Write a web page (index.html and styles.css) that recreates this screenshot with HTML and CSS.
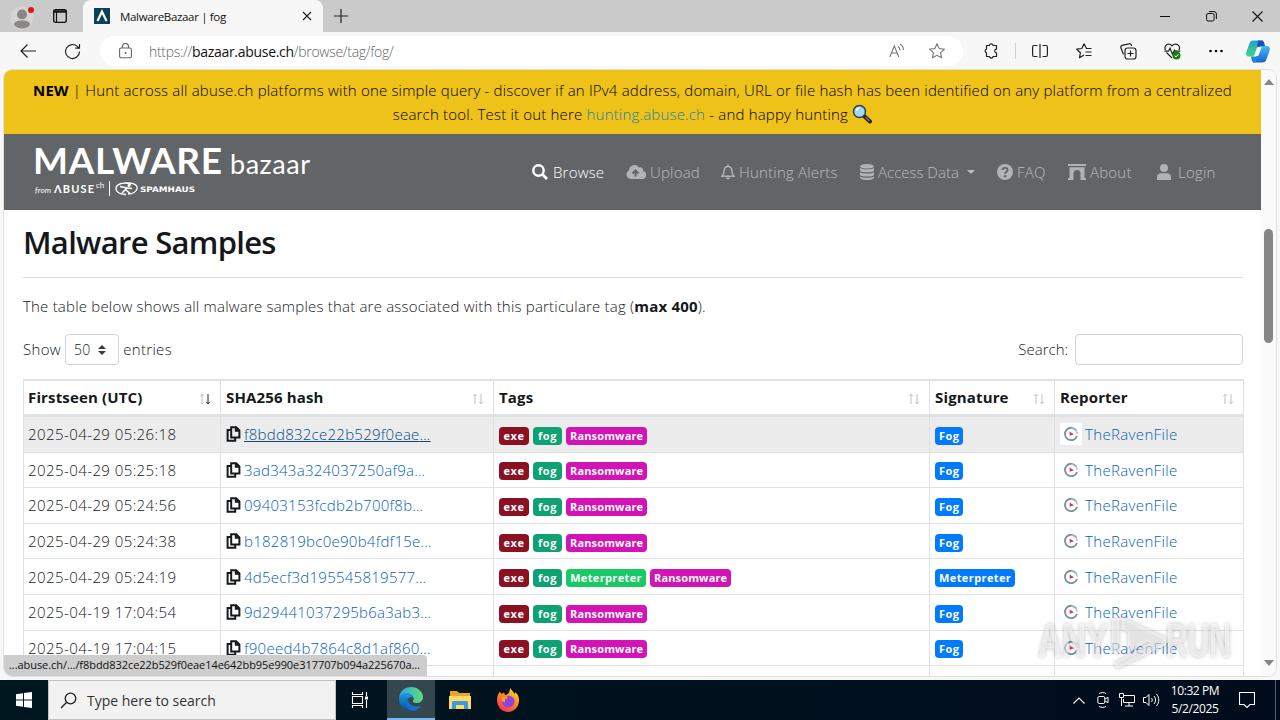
FILE: index.html
```html
<!DOCTYPE html>
<html lang="en">

<head>
    <meta charset="UTF-8">
    <meta name="viewport" content="width=device-width, initial-scale=1.0">
    <title>MalwareBazaar | fog</title>
    <link rel="stylesheet" href="styles.css">
</head>

<body>
    <svg class="sprite" width="0" height="0">
        <symbol id="copy" viewBox="0 0 15 16">
            <path d="M5.2 1.2h5l3.2 3.2v7.2H5.2zM9.8 1.2v3.6h3.6M5 4H1.6v10.8h7.6V12" fill="none" stroke="#16191c" stroke-width="2" />
        </symbol>
        <symbol id="sort" viewBox="0 0 12 12">
            <path d="M3 11V1.5M1.2 3.2L3 1.2l1.8 2" fill="none" stroke="#bfc0c1" />
            <path d="M9 1v9.5M7.2 8.8l1.8 2 1.8-2" fill="none" stroke="#bfc0c1" />
        </symbol>
        <symbol id="sort-desc" viewBox="0 0 12 12">
            <path d="M3 11V1.5M1.2 3.2L3 1.2l1.8 2" fill="none" stroke="#bfc0c1" />
            <path d="M9 1v9.5M7.2 8.8l1.8 2 1.8-2" fill="none" stroke="#222" />
        </symbol>
        <symbol id="avatar" viewBox="0 0 22 22">
            <rect width="22" height="22" fill="#fff" />
            <path d="M16.300 7.500A6.200 6.200 0 1 0 17 13" fill="none" stroke="#78909c" stroke-width="1.800" />
            <path d="M11 5.300a6 6 0 0 1 6.200 5.500" fill="none" stroke="#a9bac0" stroke-width="1.400" />
            <path d="M9.500 8.500l4.500 2.700-4.200 1.600z" fill="#d8365a" />
        </symbol>
    </svg>

    <!-- browser tabs -->
    <div class="tabbar">
        <svg class="profile" width="24" height="28" viewBox="0 0 24 28">
            <circle cx="12" cy="16" r="11.5" fill="#d6d4d2" />
            <circle cx="12" cy="12.5" r="5" fill="#8a8886" />
            <path d="M4 23c0-3.500 3.500-4.500 8-4.500s8 1 8 4.500c-2 2.500-5 3.500-8 3.500s-6-1-8-3.500z" fill="#8a8886" />
            <circle cx="21" cy="8" r="3" fill="#e0141e" />
        </svg>
        <svg class="workspace" width="16" height="16" viewBox="0 0 16 16">
            <rect x="1.700" y="1.700" width="12.600" height="12.600" rx="2" fill="none" stroke="#111" stroke-width="1.300" />
            <path d="M1.500 3.500h13" stroke="#111" stroke-width="2.400" fill="none" />
            <path d="M4.500 4v10" stroke="#111" stroke-width="1.200" />
        </svg>
        <div class="tab">
            <svg width="16" height="16" viewBox="0 0 16 16">
                <rect width="16" height="16" fill="#0b4251" />
                <path d="M3.500 13L8 3.500 12.500 13" fill="none" stroke="#fff" stroke-width="2.200" />
            </svg>
            <span class="tab-title">MalwareBazaar | fog</span>
            <svg width="10" height="10" viewBox="0 0 10 10"><path d="M1 1l8 8M9 1l-8 8" stroke="#222" stroke-width="1.200" /></svg>
        </div>
        <svg class="plus" width="14" height="14" viewBox="0 0 14 14"><path d="M7 0v14M0 7h14" stroke="#222" stroke-width="1.200" /></svg>
        <div class="controls">
            <span><svg width="10" height="10" viewBox="0 0 10 10"><path d="M0 5.500h10" stroke="#111" /></svg></span>
            <span><svg width="11" height="11" viewBox="0 0 11 11"><rect x=".6" y="2.500" width="7.500" height="7.500" rx="1.500" fill="none" stroke="#111" /><path d="M3 .6h5a2.400 2.400 0 0 1 2.400 2.400v5" fill="none" stroke="#111" /></svg></span>
            <span><svg width="11" height="11" viewBox="0 0 11 11"><path d="M.5.5l10 10M10.500.5l-10 10" stroke="#111" stroke-width="1.100" /></svg></span>
        </div>
    </div>

    <!-- address bar -->
    <div class="toolbar">
        <svg class="back" width="16" height="14" viewBox="0 0 16 14"><path d="M16 7H1M7.500.5L1 7l6.500 6.500" fill="none" stroke="#222" stroke-width="1.200" /></svg>
        <svg class="reload" width="17" height="17" viewBox="0 0 17 17"><path d="M15.500 8.500a7 7 0 1 1-2-4.900L15.300 5M15.500 1v4.200h-4.200" fill="none" stroke="#222" stroke-width="1.200" /></svg>
        <div class="address">
            <svg class="lock" width="13" height="16" viewBox="0 0 13 16"><rect x=".6" y="5" width="11.800" height="9.800" rx="1.500" fill="none" stroke="#666" stroke-width="1.100" /><path d="M3.500 5V3.500a3 3 0 0 1 6 0V5" fill="none" stroke="#666" stroke-width="1.100" /><circle cx="6.500" cy="10" r="1" fill="#666" /></svg>
            <span class="url">https://<b>bazaar.abuse.ch</b>/browse/tag/fog/</span>
            <svg class="read" width="16" height="16" viewBox="0 0 16 16"><path d="M.8 14L5.300 3l4.500 11M2.500 10h5.600M9 3.500c1.500 1 2 2.300 2 4M11 1c2.500 1.500 3.500 3.500 3.500 6" fill="none" stroke="#777" stroke-width="1.100" /></svg>
            <svg width="16" height="16" viewBox="0 0 16 16"><path d="M8 .8l2.200 4.700 5.100.7-3.700 3.500.9 5.100L8 12.300l-4.500 2.500.9-5.100L.7 6.200l5.100-.7z" fill="none" stroke="#777" stroke-width="1.100" /></svg>
        </div>
        <span class="tool"><svg width="16" height="16" viewBox="0 0 16 16"><path d="M3.500 2.500H6.300a2 2 0 0 1 3.900 0H13.500v3.700a1.700 1.700 0 0 0 0 3.600v3.700h-3.300a2 2 0 0 1-3.900 0H3.500v-3.600a2 2 0 0 1 0-3.800z" fill="none" stroke="#222" stroke-width="1.200" stroke-linejoin="round" /></svg></span>
        <i class="divider"></i>
        <span class="tool"><svg width="16" height="14" viewBox="0 0 16 14"><path d="M5.500 1.500H2A1.500 1.500 0 0 0 .6 3v8A1.500 1.500 0 0 0 2 12.500h3.500M10.500 1.500h3.500A1.500 1.500 0 0 1 15.400 3v8a1.500 1.500 0 0 1-1.400 1.500h-3.500M8 0v14" fill="none" stroke="#222" stroke-width="1.200" /></svg></span>
        <span class="tool"><svg width="16" height="16" viewBox="0 0 16 16"><path d="M15.500 5.500h-5L8 .8 5.800 5.500l-5.100.7 3.700 3.500-.9 5.100L8 12M9.500 9h6M9.500 12.500h6" fill="none" stroke="#222" stroke-width="1.200" stroke-linejoin="round" /></svg></span>
        <span class="tool"><svg width="17" height="17" viewBox="0 0 17 17"><rect x="5" y="5" width="11" height="11" rx="2.500" fill="none" stroke="#222" stroke-width="1.200" /><path d="M10.500 7.500v6M7.500 10.500h6M3.500 11.500l-2.700-7A2 2 0 0 1 2 2.400l7-1.600a2 2 0 0 1 2.500 1.500v.7" fill="none" stroke="#222" stroke-width="1.200" /></svg></span>
        <span class="tool"><svg width="17" height="17" viewBox="0 0 17 17"><path d="M1.500 7C0 4 2 1.200 4.600 1.200c2 0 3.400 1.600 3.400 1.600s1.400-1.600 3.600-1.600C14.500 1.200 16.500 4 15 7M2.500 9.500L8 15M.5 8.200h4l1.500-3 2.500 6 2-4 .8 1h5" fill="none" stroke="#222" stroke-width="1.200" /><circle cx="12.500" cy="12.500" r="4" fill="#128012" /><path d="M10.700 12.700l1.300 1.200 2.400-2.600" fill="none" stroke="#fff" /></svg></span>
        <span class="tool"><svg width="14" height="4" viewBox="0 0 14 4"><circle cx="1.500" cy="2" r="1.300" /><circle cx="7" cy="2" r="1.300" /><circle cx="12.500" cy="2" r="1.300" /></svg></span>
        <span class="tool copilot"><svg width="24" height="23" viewBox="0 0 24 23">
            <defs>
                <linearGradient id="cop1" x1="0" y1="0" x2="0" y2="1"><stop offset="0" stop-color="#18a5d8" /><stop offset="1" stop-color="#4fd07c" /></linearGradient>
                <linearGradient id="cop2" x1="0" y1="0" x2="0" y2="1"><stop offset="0" stop-color="#48b9f5" /><stop offset="1" stop-color="#1464d2" /></linearGradient>
            </defs>
            <path d="M8 .5h9l-2 6-4 1-2.500 7C8 16 7 16.500 5.500 16.500H3C.5 16.500-.3 14.500.4 12L3.600 3C4.500 1 6 .5 8 .5z" fill="url(#cop1)" />
            <path d="M12 .5h3.500c2 0 2.500 1.500 3 3.500l.7 2.500h-5.500L11 7z" fill="#1756b8" />
            <path d="M16 22.500H7l2-5 3.500-2 3-8c.4-1.200 1.200-1.500 2.500-1.500h3c2.500 0 3.300 2 2.600 4.500l-3.200 9c-.8 2.400-2 3-4.400 3z" fill="url(#cop2)" />
            <path d="M5 16.500h5l2.500-1-2 5c-.5 1.500-1.500 2-2.500 2-2 0-2.500-3-3-6z" fill="#168bdc" />
        </svg></span>
    </div>

    <!-- page -->
    <div class="viewport">
        <div class="page">
            <div class="banner">
                <div class="line1"><b>NEW</b> | Hunt across all abuse.ch platforms with one simple query - discover if an IPv4 address, domain, URL or file hash has been identified on any platform from a centralized</div>
                <div class="line2">search tool. Test it out here <a>hunting.abuse.ch</a> - and happy hunting <svg width="20" height="20" viewBox="0 0 20 20"><path d="M11.500 11.500l6.500 6" stroke="#222" stroke-width="4" stroke-linecap="round" /><path d="M13.500 13l4 4" stroke="#777" stroke-width="1.400" /><circle cx="7.500" cy="7.500" r="6" fill="#9ed8f6" stroke="#2d3d49" stroke-width="1.500" /><path d="M4.500 7a3 3 0 0 1 3-3" stroke="#fff" stroke-width="1.500" fill="none" /></svg></div>
            </div>
            <div class="navbar">
                <svg class="logo" width="280" height="56" viewBox="0 0 280 56" fill="#fff">
                    <text class="logo-main" x="-1" y="32" textLength="189">MALWARE</text>
                    <text class="logo-sub" x="196" y="32" textLength="80">bazaar</text>
                    <text class="logo-from" x="1" y="51" textLength="16">from</text>
                    <text class="logo-abuse" x="20" y="51" textLength="40">ΛBUSE</text>
                    <text class="logo-ch" x="62" y="46">ch</text>
                    <path d="M75.500 39v15" stroke="#fff" />
                    <path d="M97 42.500c-6-3-15-1-15 4 0 4 5 6 10 6M90 41c9-1 14 2 13 6-1 3-5 5-9 5" fill="none" stroke="#fff" stroke-width="1.300" />
                    <circle cx="95" cy="43.500" r="1.500" />
                    <path d="M86 44.500l7 1.500-5 5M93 46l5 .5M92 48l4 3.500" fill="none" stroke="#fff" stroke-width="1.500" />
                    <text class="logo-spam" x="106" y="50" textLength="55" lengthAdjust="spacingAndGlyphs">SPAMHAUS</text>
                </svg>
                <div class="nav">
                    <a class="browse active"><svg width="16" height="16" viewBox="0 0 16 16"><circle cx="6.500" cy="6.500" r="5.200" fill="none" stroke="#fff" stroke-width="2.400" /><path d="M10.300 10.300L15 15" stroke="#fff" stroke-width="2.800" /></svg><span>Browse</span></a>
                    <a class="upload"><svg width="20" height="14" viewBox="0 0 20 14"><path d="M5 14a4.700 4.700 0 0 1-2-8.800A5.500 5.500 0 0 1 13 2.500a3 3 0 0 1 4 3.600A4 4 0 0 1 16 14z" fill="#b0b2b4" /><path d="M9.500 11.500V6.500M6.500 8.500l3-3 3 3" stroke="#626568" stroke-width="2" fill="none" /></svg><span>Upload</span></a>
                    <a class="alerts"><svg width="14" height="16" viewBox="0 0 14 16"><path d="M7 .3v2M1 12.200c2-2 2-3 2.200-6a3.800 3.800 0 0 1 7.600 0c.2 3 .2 4 2.200 6z" fill="none" stroke="#b0b2b4" stroke-width="1.500" /><path d="M5 13.500h4a2 2 0 0 1-4 0z" fill="#b0b2b4" /></svg><span>Hunting Alerts</span></a>
                    <a class="access"><svg width="14" height="16" viewBox="0 0 14 16" fill="#b0b2b4"><ellipse cx="7" cy="2.300" rx="7" ry="2.300" /><path d="M0 4c2 1.700 12 1.700 14 0v2.700c-1 2-13 2-14 0zM0 8.300c2 1.700 12 1.700 14 0V11c-1 2-13 2-14 0zM0 12.500c2 1.700 12 1.700 14 0v1.300c-1 3-13 3-14 0z" /></svg><span>Access Data</span><i class="caret"></i></a>
                    <a class="faq"><svg width="16" height="16" viewBox="0 0 16 16"><circle cx="8" cy="8" r="8" fill="#b0b2b4" /><path d="M5.500 6c.3-3 5-2.600 5 0 0 1.800-2.300 1.700-2.300 3.800" fill="none" stroke="#626568" stroke-width="1.900" /><circle cx="8.100" cy="12.200" r="1.200" fill="#626568" /></svg><span>FAQ</span></a>
                    <a class="about"><svg width="18" height="16" viewBox="0 0 18 16"><path d="M0 0h18v2H0zM1.500 3.200h15V14H18v2h-5.500V9.500a3.500 3.500 0 0 0-7 0V16H0v-2h1.500z" fill="#b0b2b4" /></svg><span>About</span></a>
                    <a class="login"><svg width="14" height="16" viewBox="0 0 14 16" fill="#b0b2b4"><circle cx="7" cy="4" r="4" /><path d="M0 16v-2.500C0 10.500 2 9.300 4.200 9.300h5.600c2.200 0 4.200 1.200 4.200 4.200V16z" /></svg><span>Login</span></a>
                </div>
            </div>

            <div class="content">
                <h1>Malware Samples</h1>
                <p class="intro">The table below shows all malware samples that are associated with this particulare tag (<b>max 400</b>).</p>
                <div class="controls-row">
                    <label class="length"><span>Show </span><div class="select">50 <svg width="8" height="10" viewBox="0 0 8 10"><path d="M0 4l4-4 4 4zM0 6l4 4 4-4z" fill="#343a40" /></svg></div><span> entries</span></label>
                    <label class="search"><span>Search: </span><input type="text"></label>
                </div>

                <table>
                    <colgroup><col class="c1"><col class="c2"><col class="c3"><col class="c4"><col class="c5"></colgroup>
                    <thead>
                        <tr>
                            <th>Firstseen (UTC)<svg><use href="#sort-desc" /></svg></th>
                            <th>SHA256 hash<svg><use href="#sort" /></svg></th>
                            <th>Tags<svg><use href="#sort" /></svg></th>
                            <th>Signature<svg><use href="#sort" /></svg></th>
                            <th>Reporter<svg><use href="#sort" /></svg></th>
                        </tr>
                    </thead>
                    <tbody id="samples"></tbody>
                </table>
            </div>
        </div>
        <div class="scrollbar">
            <svg width="10" height="6" viewBox="0 0 10 6"><path d="M0 6l5-6 5 6z" fill="#858585" /></svg>
            <i class="thumb"></i>
            <svg width="10" height="6" viewBox="0 0 10 6"><path d="M0 0l5 6 5-6z" fill="#858585" /></svg>
        </div>
        <div class="status"><span>...abuse.ch/.../f8bdd832ce22b529f0eae14e642bb95e990e317707b094a225670a...</span></div>
        <svg class="watermark" width="200" height="64" viewBox="0 0 200 64">
            <text x="2" y="48" textLength="70" lengthAdjust="spacingAndGlyphs">ANY</text>
            <path d="M76 10h7v34h-7zM86 8l44 21v7L81 60l-3-6 36-20-28-14zM92 21l20 11-20 12z" />
            <text x="130" y="48" textLength="65" lengthAdjust="spacingAndGlyphs">RUN</text>
        </svg>
    </div>

    <!-- windows taskbar -->
    <div class="taskbar">
        <span class="start"><svg width="16" height="16" viewBox="0 0 16 16"><path d="M0 2.300L7 1.300v6.200H0zM8 1.100L16 0v7.500H8zM0 8.500h7v6.200l-7-1zM8 8.500h8V16l-8-1.100z" fill="#fff" /></svg></span>
        <div class="find"><svg width="17" height="17" viewBox="0 0 17 17"><circle cx="10.500" cy="6.500" r="5.300" fill="none" stroke="#222" stroke-width="1.300" /><path d="M6.700 10.300L1 16" stroke="#222" stroke-width="1.400" /></svg><span>Type here to search</span></div>
        <span class="app taskview"><svg width="18" height="16" viewBox="0 0 18 16"><path d="M1.500 0v2.500h10V0M1.500 16v-2.500h10V16M1.500 4.500h10v7h-10zM15.500 0v4M15.500 8v8" fill="none" stroke="#fff" stroke-width="1.100" /><rect x="14" y="4.500" width="3" height="3" fill="#fff" /></svg></span>
        <span class="app open"><svg width="24" height="24" viewBox="0 0 24 24">
            <defs>
                <linearGradient id="edge1" x1="0" y1="0" x2="1" y2="0"><stop offset="0" stop-color="#28a7e9" /><stop offset="1" stop-color="#63dc71" /></linearGradient>
                <linearGradient id="edge2" x1="0" y1="0" x2="0" y2="1"><stop offset="0" stop-color="#1b9de2" /><stop offset="1" stop-color="#0b4d9c" /></linearGradient>
            </defs>
            <path d="M.2 10.500C1 4 6 0 12 0c7 0 12 5 12 10 0 4-3 6-6.500 6-3 0-4-1.200-3.500-2 1.500-2.500.5-6-4-6.500C6 7 2 8 .2 10.500z" fill="url(#edge1)" />
            <path d="M.1 12C.1 8 4 5.500 8.500 6c4 .3 6 3 5.700 5.500C14 10 9 9 8.500 14c0 4 4 7 10 6 1.500-.3 2.500-.7 3.500-1.400C20 22 16 24 12 24 5 24 .1 19 .1 12z" fill="url(#edge2)" />
            <path d="M8.700 12C5 15 7 21.500 13 23.900c4 0 7.500-2.500 9-5.200-5 2-12 .3-13.300-6.700z" fill="#1470c4" />
        </svg></span>
        <span class="app"><svg width="22" height="20" viewBox="0 0 22 20"><path d="M1 1h7l2 2h11v16H1z" fill="#e9a820" /><path d="M0 6h22v13H0z" fill="#ffd76a" /><path d="M3 19v-6.500A1.500 1.500 0 0 1 4.500 11h13a1.500 1.500 0 0 1 1.500 1.500V19h-4v-4H7v4z" fill="#3c9be0" /></svg></span>
        <span class="app"><svg width="24" height="24" viewBox="0 0 24 24">
            <defs><linearGradient id="ff" x1=".8" y1="0" x2=".2" y2="1"><stop offset="0" stop-color="#ffe22f" /><stop offset=".45" stop-color="#ff8a1c" /><stop offset="1" stop-color="#f52a5e" /></linearGradient></defs>
            <path d="M1 12C1 8 2.500 5 4 3.500c.3 1.200.8 2 1.500 2.500L8 4.500 9 7c2-.2 3-1 4-2.500.7-1.500.7-3 1.500-4.500 1 2.500 3 3.500 4 6 .8-.5 1-1.300 1-2 3 3 3.500 6 3.500 8.500C23 19 18 24 12 24S1 19 1 12z" fill="url(#ff)" />
            <path d="M11 8c4-1 8 1.800 7.500 6-.5 3.500-3.500 5.300-6.500 5.300S6 17 6 13.500c0-2 1-3.500 2.500-4.500 0 1.200 1 1.500 3.500 1.500z" fill="#8b44dd" />
            <path d="M5.500 9.500c2-1.200 4-.5 5.500.7-2 .8-2.500 2.200-2 3.800-2 1-4-1.500-3.500-4.500z" fill="#ff9b24" />
        </svg></span>
        <div class="tray">
            <span class="tray-icon"><svg width="12" height="7" viewBox="0 0 12 7"><path d="M.5 6.500l5.500-5.500 5.500 5.500" fill="none" stroke="#fff" stroke-width="1.100" /></svg></span>
            <span class="tray-icon"><svg width="12" height="16" viewBox="0 0 12 16"><rect x=".8" y="4.500" width="7" height="7" rx="1.500" fill="none" stroke="#fff" /><path d="M8 7l3-1.700v5.400L8 9M2 1.500c2.500-1.200 5-1.200 7 0M2 14.500c2.500 1.200 5 1.200 7 0" fill="none" stroke="#fff" /></svg></span>
            <span class="tray-icon"><svg width="16" height="14" viewBox="0 0 16 14"><path d="M5 2.500h10.500v7H4.500V6M10 9.500V13M6 13h8M.5.5h4v4h-4zM2.500 4.500V13" fill="none" stroke="#fff" /></svg></span>
            <span class="tray-icon"><svg width="17" height="14" viewBox="0 0 17 14"><path d="M.5 4.500H3l3-3v11l-3-3H.5zM8.500 5c1 1.200 1 2.800 0 4M11 3c2 2.400 2 5.600 0 8M13.500 1c3 3.600 3 8.400 0 12" fill="none" stroke="#fff" /></svg></span>
            <div class="clock"><div>10:32 PM</div><div>5/2/2025</div></div>
            <svg class="notify" width="16" height="16" viewBox="0 0 16 16"><path d="M.5.500h15v12H11L8 15.500 5 12.500H.5z" fill="none" stroke="#fff" stroke-width="1.100" /></svg>
            <i class="peek"></i>
        </div>
    </div>

    <script src="samples.js"></script>
</body>

</html>
```
FILE: styles.css
```css
* {
    box-sizing: border-box;
}

body {
    margin: 0;
    width: 1280px;
    height: 720px;
    overflow: hidden;
    display: flex;
    flex-direction: column;
    background: #f7f7f7;
    color: #15181b;
    font-family: "Open Sans", "Noto Sans", sans-serif;
    font-size: 15px;
    font-weight: 340;
}

svg {
    flex: none;
    display: block;
}

.sprite {
    position: absolute;
}

a {
    color: #0562bd;
    text-decoration: none;
}

b {
    font-weight: 700;
}

/* tabs */
.tabbar {
    display: flex;
    align-items: center;
    height: 32px;
    flex: none;
    background: #cacaca;
}

.profile {
    margin-left: 10px;
}

.workspace {
    margin: 0 15px 0 18px;
}

.tab {
    width: 240px;
    height: 32px;
    padding: 0 11px;
    display: flex;
    align-items: center;
    background: #f7f7f7;
    border-radius: 8px 8px 0 0;
}

.tab-title {
    flex: 1;
    margin-left: 10px;
    font-size: 11.5px;
    font-weight: 400;
    letter-spacing: -0.33px;
    color: #111;
}

.plus {
    margin-left: 11px;
}

.controls {
    display: flex;
    margin-left: auto;
}

.controls span {
    width: 46px;
    display: flex;
    align-items: center;
    justify-content: center;
}

/* toolbar */
.toolbar {
    display: flex;
    align-items: center;
    height: 38px;
    flex: none;
}

.back {
    margin-left: 20px;
}

.reload {
    margin: 0 19px 0 28px;
}

.address {
    flex: 1;
    height: 30px;
    margin-right: 6px;
    padding: 0 18px 0 19px;
    display: flex;
    align-items: center;
    background: #fff;
    border-radius: 15px;
}

.url {
    flex: 1;
    margin-left: 17px;
    font-size: 14px;
    letter-spacing: -0.3px;
    color: #666;
}

.url b {
    font-weight: 400;
    color: #111;
}

.read {
    margin-right: 24px;
}

.tool {
    width: 44px;
    display: flex;
    justify-content: center;
}

.copilot {
    width: 40px;
    margin-right: 2px;
}

.divider {
    width: 1px;
    height: 16px;
    margin: 0 2px;
    background: #d0d0d0;
}

/* page frame */
.viewport {
    position: relative;
    display: flex;
    height: 606px;
    margin: 0 4px 4px;
    flex: none;
    background: #fff;
    border-radius: 8px;
    overflow: hidden;
    box-shadow: 0 0 0 1px #e0e0e0;
}

.page {
    width: 1257px;
    height: 606px;
    overflow: hidden;
}

.banner {
    height: 64px;
    padding-top: 8px;
    background: #efc219;
    color: #000;
    text-align: center;
    line-height: 24px;
    letter-spacing: 0.18px;
    white-space: nowrap;
}

.banner svg {
    display: inline-block;
    vertical-align: -4px;
}

.banner a {
    color: #1b83a8;
}

.navbar {
    display: flex;
    height: 76px;
    background: #626568;
}

.logo {
    margin: 8px 0 0 30px;
}

.logo-main {
    font: 700 37px Lato, sans-serif;
}

.logo-sub {
    font: 400 27px Lato, sans-serif;
}

.logo-from {
    font: italic 400 8px Lato, sans-serif;
}

.logo-abuse {
    font: 700 11px Lato, sans-serif;
}

.logo-ch {
    font: 400 8px Lato, sans-serif;
}

.logo-spam {
    font: 700 7.5px "DejaVu Sans", sans-serif;
}

.nav {
    display: flex;
    align-items: center;
    margin-left: 218px;
    letter-spacing: 0.2px;
}

.nav a {
    display: flex;
    align-items: center;
    gap: 4px;
    color: #b9bbbd;
    white-space: nowrap;
}

.nav a.active {
    gap: 5px;
    color: #fff;
}

.browse {
    width: 94px;
}

.upload {
    width: 95px;
}

.alerts {
    width: 139px;
}

.access {
    width: 137px;
    letter-spacing: 0;
}

.faq {
    width: 71px;
}

.about {
    width: 89px;
}

.nav a.login {
    gap: 7px;
}

.caret {
    margin-left: 4px;
    border: 4px solid transparent;
    border-top-color: #b9bbbd;
    border-bottom: 0;
}

.content {
    padding: 0 18px 0 19px;
}

h1 {
    height: 68px;
    margin: 0;
    padding-top: 11px;
    border-bottom: 1px solid #dedede;
    font-size: 31px;
    font-weight: 600;
    line-height: 42px;
    letter-spacing: -0.7px;
}

.intro {
    margin: 16px 0 16px;
    line-height: 24px;
    letter-spacing: 0.2px;
}

.controls-row {
    display: flex;
    justify-content: space-between;
    height: 31px;
    margin-bottom: 14px;
}

.controls-row label {
    display: flex;
    align-items: center;
    letter-spacing: 0.3px;
    white-space: pre;
}

.controls-row label span {
    padding-bottom: 2px;
}

.select {
    display: flex;
    align-items: center;
    justify-content: space-between;
    width: 54px;
    height: 31px;
    padding: 0 12px 0 8px;
    border: 1px solid #ced4da;
    border-radius: 4px;
    font-size: 14px;
}

.controls-row .search {
    letter-spacing: 0;
}

.search input {
    width: 168px;
    height: 31px;
    margin-left: 3px;
    border: 1px solid #ced4da;
    border-radius: 4px;
}

/* samples */
table {
    width: 1221px;
    table-layout: fixed;
    border-collapse: separate;
    border-spacing: 0;
    border-left: 1px solid #dee2e6;
}

.c1 {
    width: 197px;
}

.c2 {
    width: 273px;
}

.c3 {
    width: 436px;
}

.c4 {
    width: 125px;
}

th {
    height: 38px;
    padding: 0 4px 1px 5px;
    border: 0 solid #dee2e6;
    border-width: 2px 1px 3px 0;
    text-align: left;
    font-weight: 700;
    line-height: 24px;
    letter-spacing: 0.15px;
}

th svg {
    float: right;
    width: 12px;
    height: 12px;
    margin: 8px 5px 0 0;
}

td {
    height: 35.6px;
    padding: 0 5px;
    border: 0 solid #dee2e6;
    border-width: 0 1px 1px 0;
    letter-spacing: 0.42px;
    white-space: nowrap;
}

th:first-child,
td:first-child {
    padding-left: 4px;
}

tr.hover td {
    background: #ececec;
}

.hash,
.reporter,
.tags {
    display: flex;
    align-items: center;
}

.hash {
    letter-spacing: 0.26px;
}

.hash svg {
    width: 15px;
    height: 16px;
    margin-right: 3px;
}

.hover .hash a {
    color: #074a87;
    text-decoration: underline;
}

.reporter {
    letter-spacing: 0.35px;
}

.reporter svg {
    width: 22px;
    height: 22px;
    margin-right: 3px;
}

.tags {
    gap: 4px;
    padding-top: 3px;
}

.badge {
    height: 18px;
    padding: 0 4px;
    border-radius: 4px;
    color: #fff;
    font-size: 11px;
    font-weight: 700;
    line-height: 18px;
    text-align: center;
    letter-spacing: 0.15px;
}

.exe {
    width: 30px;
    background: #8b1022;
    letter-spacing: 0.5px;
}

.fog {
    width: 29px;
    background: #0ea172;
    letter-spacing: 0.5px;
}

.ransomware {
    width: 81px;
    background: #d313b5;
}

.meterpreter {
    width: 80px;
    background: #18c964;
    letter-spacing: 0.35px;
}

.signature {
    background: #007bff;
    letter-spacing: 0.4px;
}

/* scrollbar */
.scrollbar {
    width: 15px;
    display: flex;
    flex-direction: column;
    align-items: center;
    padding: 9px 0 10px;
    background: #fafafa;
}

.thumb {
    width: 9px;
    height: 114px;
    margin: 144px 0 auto;
    background: #868686;
    border-radius: 5px;
}

.status {
    position: absolute;
    left: 0;
    bottom: 0;
    width: 423px;
    height: 21px;
    padding-left: 5px;
    background: #cdcdcd;
    border-radius: 0 4px 0 8px;
    color: #111;
    font-size: 11px;
    font-weight: 400;
    line-height: 20px;
    letter-spacing: -0.06px;
    white-space: nowrap;
}

.watermark {
    position: absolute;
    right: 40px;
    bottom: 3px;
    fill: #fff;
    fill-opacity: 0.55;
    filter: drop-shadow(0 0 2px rgba(0, 0, 0, 0.45));
}

.watermark text {
    font: 700 48px "Liberation Sans", sans-serif;
}

/* taskbar */
.taskbar {
    display: flex;
    height: 40px;
    flex: none;
    background: linear-gradient(90deg, #00161f, #000c1c);
    color: #fff;
}

.taskbar span {
    display: flex;
    align-items: center;
    justify-content: center;
}

.start,
.app {
    width: 48px;
}

.taskview {
    margin-right: 3px;
}

.open {
    margin-right: 1px;
    background: #34474e;
    border-bottom: 2px solid #76b9ed;
}

.find {
    display: flex;
    align-items: center;
    width: 288px;
    padding-left: 11px;
    gap: 10px;
    background: #f2f2f2;
    border: 1px solid #c4c4c4;
    color: #333;
    font-weight: 400;
    font-size: 14px;
}

.tray {
    display: flex;
    align-items: center;
    margin-left: auto;
}

.tray-icon {
    width: 24px;
}

.clock {
    width: 64px;
    text-align: center;
    font-size: 12px;
    font-weight: 400;
    line-height: 18px;
    letter-spacing: -0.4px;
}

.notify {
    margin: 0 20px 0 12px;
}

.peek {
    width: 5px;
    height: 40px;
    border-left: 1px solid #59626a;
}
```
FILE: samples.js
```js
const rows = [
    ['2025-04-29 05:26:18', 'f8bdd832ce22b529f0eae', ['exe', 'fog', 'Ransomware'], 'Fog'],
    ['2025-04-29 05:25:18', '3ad343a324037250af9a', ['exe', 'fog', 'Ransomware'], 'Fog'],
    ['2025-04-29 05:24:56', '09403153fcdb2b700f8b', ['exe', 'fog', 'Ransomware'], 'Fog'],
    ['2025-04-29 05:24:38', 'b182819bc0e90b4fdf15e', ['exe', 'fog', 'Ransomware'], 'Fog'],
    ['2025-04-29 05:24:19', '4d5ecf3d195545819577', ['exe', 'fog', 'Meterpreter', 'Ransomware'], 'Meterpreter'],
    ['2025-04-19 17:04:54', '9d29441037295b6a3ab3', ['exe', 'fog', 'Ransomware'], 'Fog'],
    ['2025-04-19 17:04:15', 'f90eed4b7864c8d1af860', ['exe', 'fog', 'Ransomware'], 'Fog']
];

const badges = tags => tags.map(t => `<span class="badge ${t.toLowerCase()}">${t}</span>`).join('');

document.getElementById('samples').innerHTML = rows.map((r, i) => `
    <tr class="${i == 0 ? 'hover' : ''}">
        <td>${r[0]}</td>
        <td><div class="hash"><svg><use href="#copy" /></svg><a>${r[1]}</a><a>…</a></div></td>
        <td><div class="tags">${badges(r[2])}</div></td>
        <td><div class="tags"><span class="badge signature">${r[3]}</span></div></td>
        <td><div class="reporter"><svg><use href="#avatar" /></svg><a>TheRavenFile</a></div></td>
    </tr>`).join('') + '<tr><td></td><td></td><td></td><td></td><td></td></tr>';
```
